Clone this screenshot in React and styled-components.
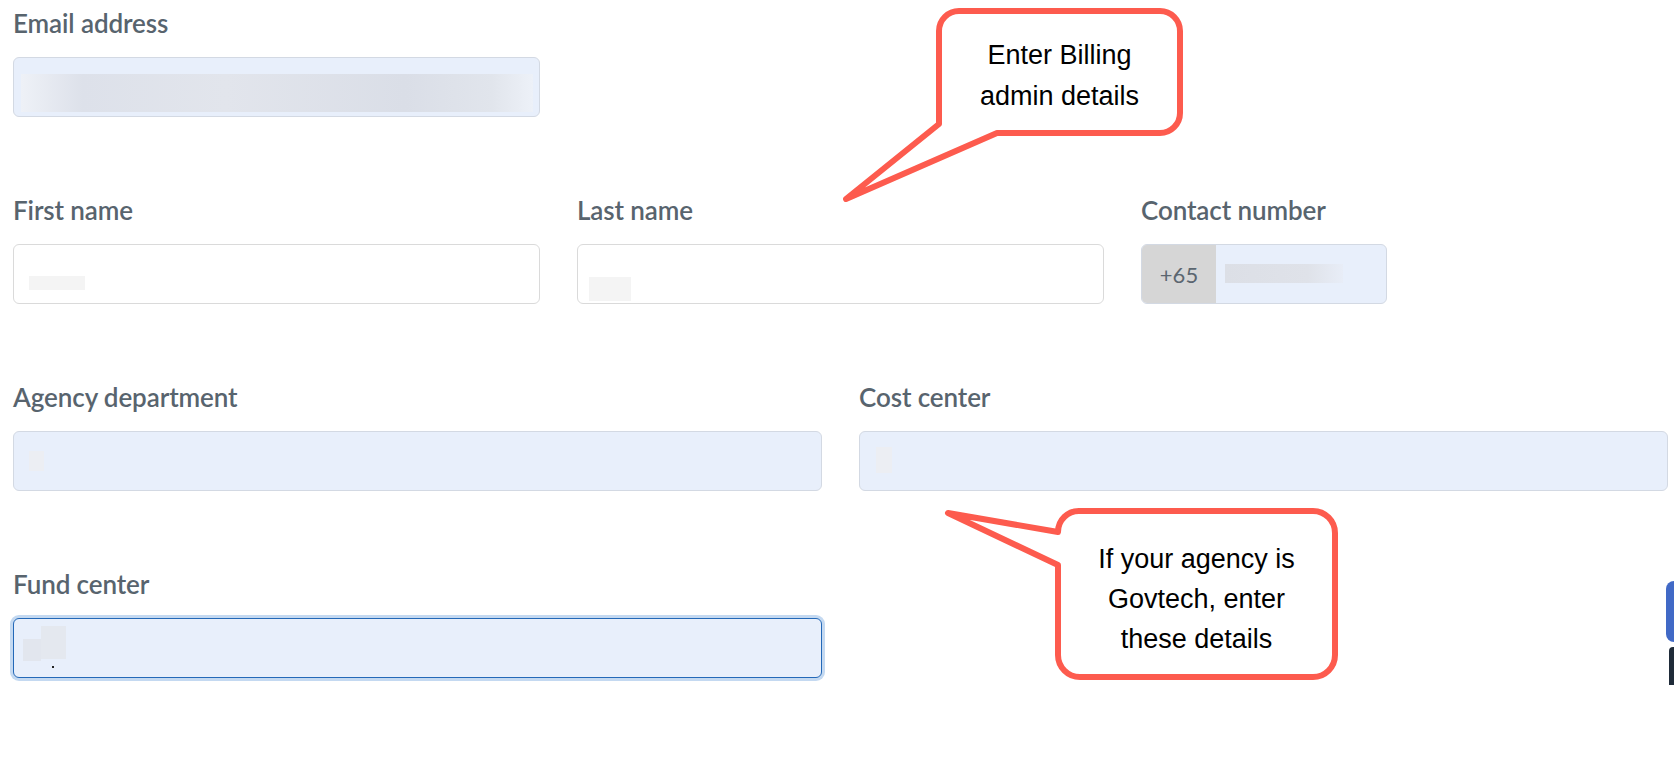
import React from "react";
import styled, { createGlobalStyle } from "styled-components";

const GlobalStyle = createGlobalStyle`
  html, body {
    margin: 0;
    padding: 0;
    background: #ffffff;
    overflow: hidden;
  }
  body {
    font-family: Lato, "Liberation Sans", sans-serif;
  }
`;

const Page = styled.div`
  position: relative;
  width: 1674px;
  height: 766px;
  background: #fff;
`;

const Form = styled.div`
  display: flex;
  flex-direction: column;
  gap: 77px;
  width: 1655px;
  padding: 7px 0 0 13px;
`;

const Row = styled.div`
  display: grid;
  grid-template-columns: repeat(${(p) => p.$cols}, 1fr);
  column-gap: 37px;
`;

const Field = styled.div`
  display: flex;
  flex-direction: column;
  gap: 18px;
  min-width: 0;
`;

const Label = styled.label`
  font-family: Lato, "Liberation Sans", sans-serif;
  font-size: 26px;
  line-height: 32px;
  font-weight: 600;
  color: #58646e;
  letter-spacing: -0.1px;
`;

const variants = {
  auto: { bg: "#e8effb", border: "#d3d9e3", ring: "none" },
  plain: { bg: "#ffffff", border: "#dadada", ring: "none" },
  focus: { bg: "#e8effb", border: "#2469b8", ring: "0 0 0 3px #c4d9f1" },
};

const InputBox = styled.div`
  position: relative;
  box-sizing: border-box;
  height: 60px;
  width: ${(p) => (p.$width ? `${p.$width}px` : "100%")};
  background: ${(p) => variants[p.$variant].bg};
  border: ${(p) => (p.$variant === "focus" ? "1.5px" : "1px")} solid ${(p) => variants[p.$variant].border};
  box-shadow: ${(p) => variants[p.$variant].ring};
  border-radius: 6px;
  overflow: hidden;
  display: flex;
`;

const Redacted = styled.span`
  position: absolute;
  left: ${(p) => p.$x}px;
  top: ${(p) => p.$y}px;
  width: ${(p) => p.$w}px;
  height: ${(p) => p.$h}px;
  background: ${(p) => p.$bg};
`;

const Prefix = styled.div`
  width: 74px;
  flex: none;
  background: #d6d6d6;
  display: flex;
  align-items: center;
  justify-content: center;
  font-family: Lato, "Liberation Sans", sans-serif;
  font-size: 22px;
  color: #5b6670;
`;

const PhoneRest = styled.div`
  position: relative;
  flex: 1;
`;

const CalloutWrap = styled.div`
  position: absolute;
  left: ${(p) => p.$left}px;
  top: ${(p) => p.$top}px;
  width: ${(p) => p.$w}px;
  height: ${(p) => p.$h}px;
  pointer-events: none;
  svg {
    position: absolute;
    inset: 0;
  }
`;

const CalloutText = styled.div`
  position: absolute;
  left: ${(p) => p.$left}px;
  top: ${(p) => p.$top}px;
  width: ${(p) => p.$w}px;
  text-align: center;
  font-family: "Liberation Sans", Arial, sans-serif;
  font-size: 27px;
  line-height: ${(p) => p.$lh}px;
  color: #000;
`;

const SideTab = styled.div`
  position: absolute;
  right: 0;
  top: 581px;
  width: 8px;
  height: 61px;
  background: #4169c6;
  border-radius: 8px 0 0 8px;
`;

const SideTabDark = styled.div`
  position: absolute;
  right: 0;
  top: 647px;
  width: 5px;
  height: 38px;
  background: #1f2b39;
  border-radius: 4px 0 0 0;
`;

const Dot = styled.span`
  position: absolute;
  left: 38px;
  top: 47px;
  width: 2px;
  height: 2px;
  background: #222;
`;

const Callout = ({ left, top, w, h, d, text, lines }) => (
  <CalloutWrap $left={left} $top={top} $w={w} $h={h}>
    <svg width={w} height={h} viewBox={`0 0 ${w} ${h}`}>
      <path
        d={d}
        fill="#fff"
        stroke="#fd5b4e"
        strokeWidth="6"
        strokeLinejoin="round"
        strokeLinecap="round"
      />
    </svg>
    <CalloutText $left={text.left} $top={text.top} $w={text.w} $lh={text.lh}>
      {lines.map((l) => (
        <div key={l}>{l}</div>
      ))}
    </CalloutText>
  </CalloutWrap>
);

const emailBand =
  "linear-gradient(90deg, #eef1f7 0%, #dde1ea 12%, #e2e5ec 40%, #dadee7 75%, #e1e5ec 92%, #edf1f8 100%)";

export default function App() {
  return (
    <Page>
      <GlobalStyle />
      <Form>
        <Row $cols={3}>
          <Field>
            <Label>Email address</Label>
            <InputBox $variant="auto">
              <Redacted $x={7} $y={16} $w={512} $h={38} $bg={emailBand} />
            </InputBox>
          </Field>
        </Row>

        <Row $cols={3}>
          <Field>
            <Label>First name</Label>
            <InputBox $variant="plain">
              <Redacted $x={15} $y={31} $w={56} $h={14} $bg="#f4f4f4" />
            </InputBox>
          </Field>
          <Field>
            <Label>Last name</Label>
            <InputBox $variant="plain">
              <Redacted $x={11} $y={32} $w={42} $h={24} $bg="#f4f4f4" />
            </InputBox>
          </Field>
          <Field>
            <Label>Contact number</Label>
            <InputBox $variant="auto" $width={246}>
              <Prefix>+65</Prefix>
              <PhoneRest>
                <Redacted
                  $x={9}
                  $y={19}
                  $w={118}
                  $h={19}
                  $bg="linear-gradient(90deg, #dcdfe6 0%, #dfe2e9 70%, #e8edf7 100%)"
                />
              </PhoneRest>
            </InputBox>
          </Field>
        </Row>

        <Row $cols={2}>
          <Field>
            <Label>Agency department</Label>
            <InputBox $variant="auto">
              <Redacted $x={15} $y={19} $w={15} $h={20} $bg="#eceef3" />
            </InputBox>
          </Field>
          <Field>
            <Label>Cost center</Label>
            <InputBox $variant="auto">
              <Redacted $x={16} $y={15} $w={16} $h={26} $bg="#eceef3" />
            </InputBox>
          </Field>
        </Row>

        <Row $cols={2}>
          <Field>
            <Label>Fund center</Label>
            <InputBox $variant="focus">
              <Redacted $x={9} $y={20} $w={18} $h={22} $bg="#e2e6ee" />
              <Redacted $x={27} $y={7} $w={25} $h={33} $bg="#e4e8ef" />
              <Dot />
            </InputBox>
          </Field>
        </Row>
      </Form>

      <Callout
        left={830}
        top={0}
        w={360}
        h={210}
        d="M129 11 H330 A20 20 0 0 1 350 31 V113 A20 20 0 0 1 330 133 H167 L16 199 L109 124 V31 A20 20 0 0 1 129 11 Z"
        text={{ left: 109, top: 35, w: 241, lh: 41 }}
        lines={["Enter Billing", "admin details"]}
      />
      <Callout
        left={930}
        top={495}
        w={420}
        h={200}
        d="M150 16 H383 A22 22 0 0 1 405 38 V160 A22 22 0 0 1 383 182 H150 A22 22 0 0 1 128 160 V70 L18 18 L128 37 A21 21 0 0 1 150 16 Z"
        text={{ left: 128, top: 44, w: 277, lh: 40 }}
        lines={["If your agency is", "Govtech, enter", "these details"]}
      />

      <SideTab />
      <SideTabDark />
    </Page>
  );
}
